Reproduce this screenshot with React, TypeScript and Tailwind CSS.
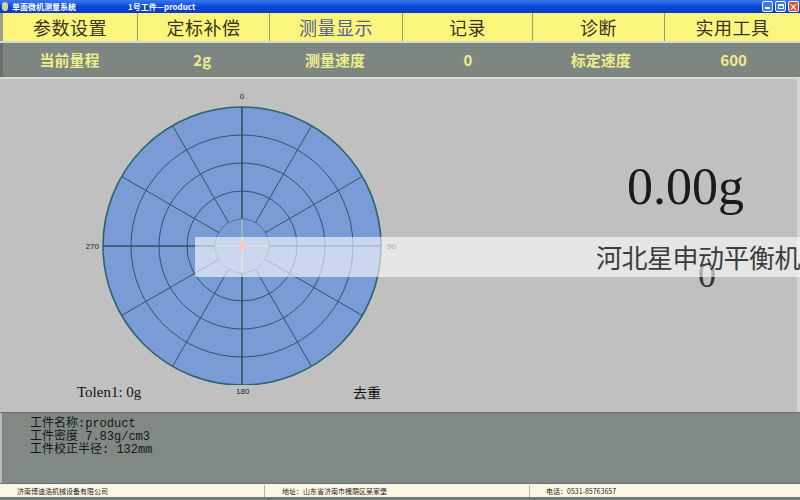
import React from "react";

const CJK = "'Noto Sans CJK SC', 'Noto Sans', sans-serif";

function Chart() {
  const cx = 242;
  const cy = 167;
  const R = 139;
  const radials = [30, 60, 120, 150, 210, 240, 300, 330];
  const axes = [0, 90, 180, 270];
  const pt = (deg: number, r: number) => {
    const a = (deg * Math.PI) / 180;
    return [cx + r * Math.sin(a), cy - r * Math.cos(a)];
  };
  return (
    <svg width={480} height={306} className="block">
      <circle cx={cx} cy={cy} r={R} fill="#7a9bd6" stroke="#2a6470" strokeWidth={1.6} />
      {[111, 83, 55].map((r) => (
        <circle key={r} cx={cx} cy={cy} r={r} fill="none" stroke="#2c5470" strokeWidth={1} />
      ))}
      <circle cx={cx} cy={cy} r={27} fill="none" stroke="#4a6c94" strokeWidth={0.9} />
      {radials.map((d) => {
        const [x1, y1] = pt(d, 27);
        const [x2, y2] = pt(d, R);
        return <line key={d} x1={x1} y1={y1} x2={x2} y2={y2} stroke="#2c5470" strokeWidth={1} />;
      })}
      {axes.map((d) => {
        const [x1, y1] = pt(d, 27);
        const [x2, y2] = pt(d, R);
        return <line key={d} x1={x1} y1={y1} x2={x2} y2={y2} stroke="#1e5c5c" strokeWidth={1.6} />;
      })}
      <line x1={cx - 27} y1={cy} x2={cx + 27} y2={cy} stroke="#a9dba9" strokeWidth={1} />
      <line x1={cx} y1={cy - 27} x2={cx} y2={cy + 27} stroke="#a9dba9" strokeWidth={1} />
      <circle cx={cx} cy={cy} r={4} fill="#f07a7a" />
      <text x={cx} y={20} textAnchor="middle" fontSize={8} fill="#222" fontFamily="'Liberation Sans', sans-serif">0</text>
      <text x={99} y={170} textAnchor="end" fontSize={8} fill="#222" fontFamily="'Liberation Sans', sans-serif">270</text>
      <text x={387} y={170} textAnchor="start" fontSize={8} fill="#222" fontFamily="'Liberation Sans', sans-serif">90</text>
    </svg>
  );
}

export default function App() {
  const tabs = ["参数设置", "定标补偿", "测量显示", "记录", "诊断", "实用工具"];
  const info = ["当前量程", "2g", "测量速度", "0", "标定速度", "600"];
  return (
    <div className="relative w-[800px] h-[500px] overflow-hidden bg-[#c0c0c0] flex flex-col" style={{ fontFamily: CJK }}>
      {/* title bar */}
      <div className="h-[13px] flex items-center bg-gradient-to-b from-[#3a78f0] via-[#0a48d8] to-[#0a3cc0] text-white text-[8px] font-bold leading-none">
        <div className="w-[6px] h-[9px] ml-[2px] rounded-sm bg-[#d8d0a0]" />
        <span className="ml-[4px] w-[116px]">单面微机测量系统</span>
        <span>1号工件—product</span>
        <div className="ml-auto flex gap-[2px] pr-[1px]">
          <div className="w-[11px] h-[11px] rounded-[2px] bg-[#3a78f0] border border-white flex items-end justify-center pb-[2px]">
            <div className="w-[5px] h-[2px] bg-white" />
          </div>
          <div className="w-[11px] h-[11px] rounded-[2px] bg-[#3a78f0] border border-white flex items-center justify-center">
            <div className="w-[6px] h-[5px] border border-white border-t-2" />
          </div>
          <div className="w-[11px] h-[11px] rounded-[2px] bg-[#e0502c] border border-white flex items-center justify-center text-white text-[9px] leading-none font-bold">×</div>
        </div>
      </div>
      {/* tabs */}
      <div className="h-[28px] grid grid-cols-[135px_132px_133px_130px_132px_1fr] bg-[#fbf57e] border-l-[3px] border-[#9c9c88]">
        {tabs.map((t, i) => (
          <div
            key={t}
            className={`flex items-center justify-center text-[18px] tracking-[0.5px] ${i < 5 ? "border-r border-[#9a9a74]" : ""} ${i === 2 ? "text-[#51608c]" : "text-[#3a3420]"}`}
          >
            {t}
          </div>
        ))}
      </div>
      <div className="h-[2px] bg-[#d8dad2]" />
      {/* info bar */}
      <div className="h-[34px] grid grid-cols-6 bg-[#7d8681] border-l-[3px] border-[#6a716c]">
        {info.map((t, i) => (
          <div key={i} className="flex items-center justify-center text-[15px] font-bold text-[#eeee8e]">
            {t}
          </div>
        ))}
      </div>
      <div className="h-[2px] bg-[#dadcd6]" />
      {/* main */}
      <div className="h-[333px] flex bg-[#c0c0c0] border-r-[3px] border-[#d4d6d0]">
        <div className="w-[480px] flex flex-col">
          <Chart />
          <div className="h-[14px] flex items-center text-[#111]">
            <span className="ml-[77px] w-[159px] text-[15px] leading-none" style={{ fontFamily: "'Liberation Serif', serif" }}>Tolen1: 0g</span>
            <span className="w-[12px] text-center text-[8px] leading-none text-[#222]" style={{ fontFamily: "'Liberation Sans', sans-serif" }}>180</span>
            <span className="ml-[105px] text-[14px] leading-none">去重</span>
          </div>
        </div>
        <div className="flex-1 flex flex-col pl-[147px] pt-[82px] text-[#1a1a1a]" style={{ fontFamily: "'Liberation Serif', serif" }}>
          <div className="text-[52px] leading-none">0.00g</div>
          <div className="mt-[44px] ml-[71px] text-[36px] leading-none text-[#333]">0</div>
        </div>
      </div>
      <div className="h-[1px] bg-[#686e6a]" />
      {/* bottom panel */}
      <div className="h-[70px] bg-[#808984] border-l-[2px] border-[#b8bdb8] pl-[28px] pt-[5px] text-[12px] leading-[13px] text-[#161616]" style={{ fontFamily: "'Liberation Mono', 'Noto Sans CJK SC', monospace" }}>
        <div>工件名称:product</div>
        <div>工件密度 7.83g/cm3</div>
        <div>工件校正半径: 132mm</div>
      </div>
      <div className="h-[1px] bg-[#6a706c]" />
      <div className="h-[1px] bg-[#f4f4ec]" />
      {/* status bar */}
      <div className="h-[12px] grid grid-cols-[265px_265px_1fr] bg-[#fcf7e4] text-[7px] leading-none text-[#222]">
        <div className="flex items-center pl-[17px] border-r border-[#b8b8a8]">济南博迪浩机械设备有限公司</div>
        <div className="flex items-center pl-[17px] border-r border-[#b8b8a8]">地址：山东省济南市槐荫区吴家堡</div>
        <div className="flex items-center pl-[16px]">电话：0531-85763657</div>
      </div>
      <div className="flex-1 bg-[#6e7a78]" />
      {/* watermark band */}
      <div className="absolute left-[195px] top-[237px] w-[605px] h-[40px] bg-white/60 flex items-center justify-end">
        <span className="text-[26px] leading-none text-[#3c3c3c] tracking-[-0.5px]">河北星申动平衡机</span>
      </div>
    </div>
  );
}
